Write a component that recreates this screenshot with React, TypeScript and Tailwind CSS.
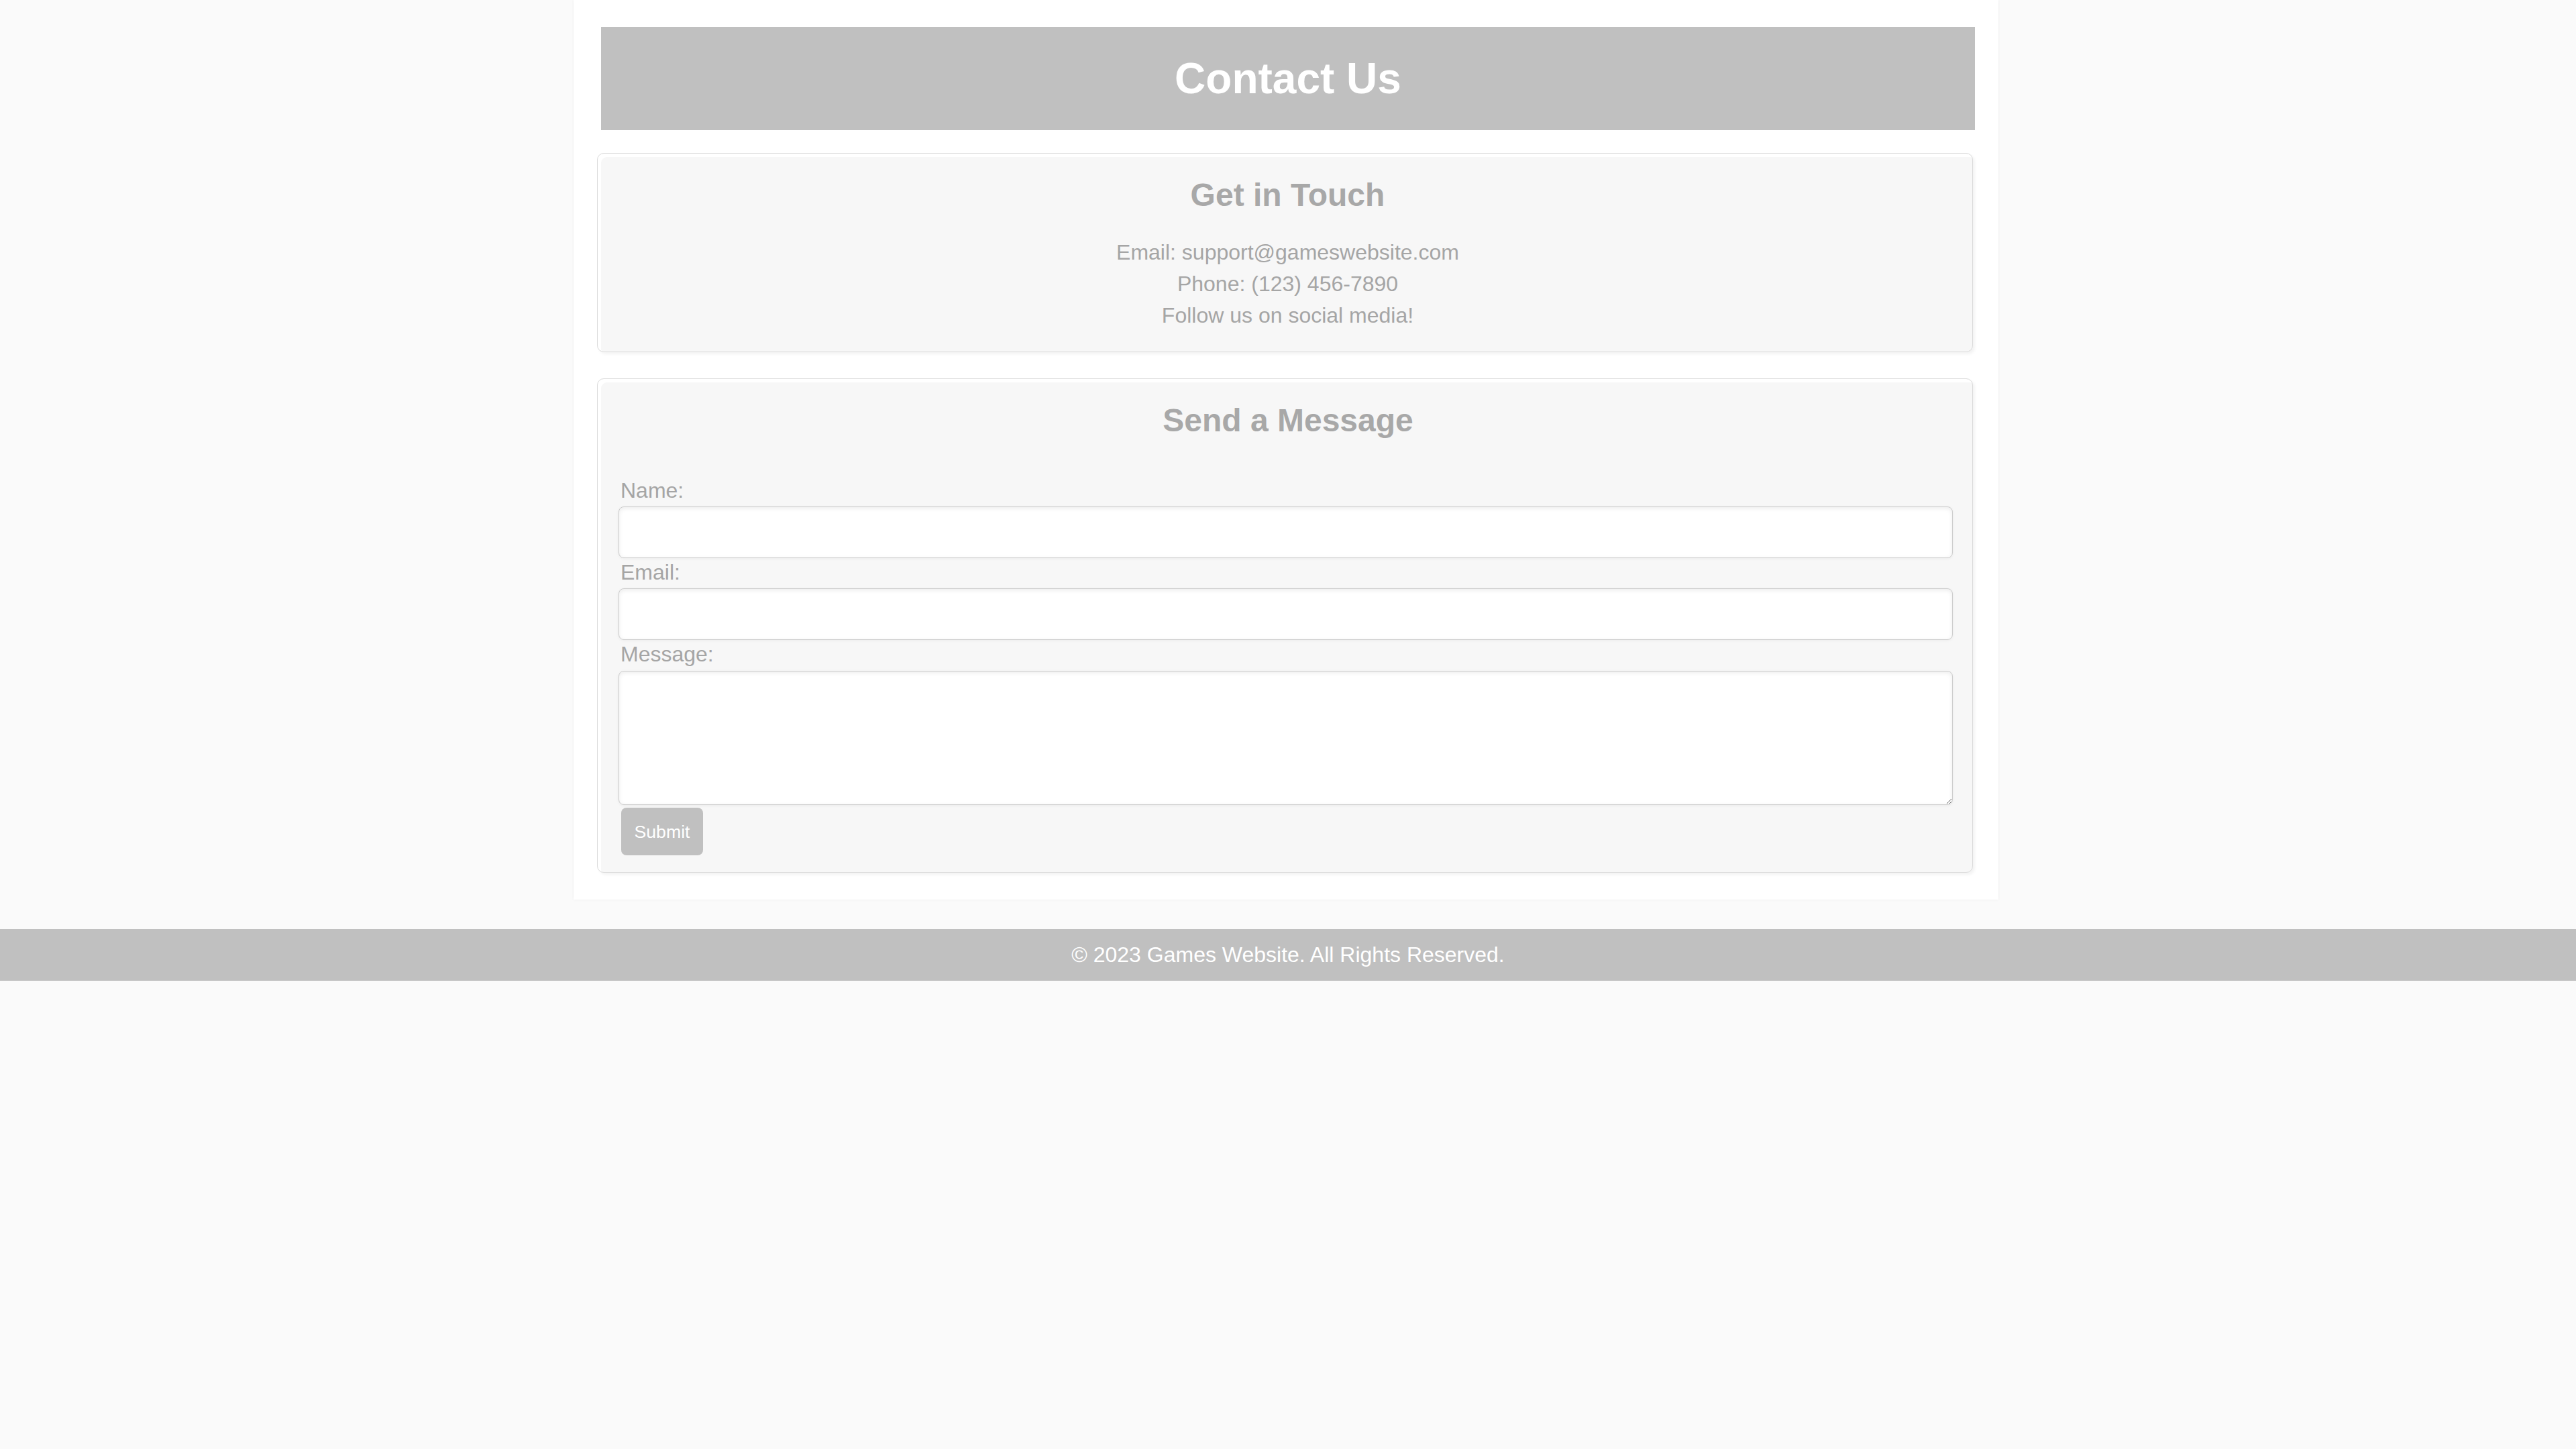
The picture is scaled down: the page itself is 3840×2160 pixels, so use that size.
import React from 'react';

const Card = ({ children, className = '' }: { children: React.ReactNode; className?: string }) => (
  <div
    className={`rounded-[10px] border border-[#dcdcdc] bg-[#f7f7f7] pl-[31px] pr-[29px] pt-[34px] shadow-[inset_5px_5px_0_#ffffff,3px_3px_4px_rgba(0,0,0,0.05)] ${className}`}
  >
    {children}
  </div>
);

const inputClass =
  'block w-full rounded-[8px] border border-[#cccccc] bg-white shadow-[inset_0_2px_6px_rgba(0,0,0,0.08),0_1px_4px_rgba(0,0,0,0.05)] outline-none';

const App = () => {
  return (
    <div className="min-h-screen bg-[#fafafa] font-['Liberation_Sans',Arial,sans-serif]">
      <div className="pr-[6px]">
        <div className="mx-auto flex w-[2124px] flex-col bg-white pb-[40px] pl-[35px] pr-[38px] pt-[40px] shadow-[0_0_4px_rgba(0,0,0,0.06)]">
          {/* Page header */}
          <div className="-mr-[3px] ml-[6px] bg-[#c0c0c0] py-[40px] text-center text-[64px] font-bold leading-[74px] text-white">
            Contact Us
          </div>

          {/* Contact info */}
          <Card className="mt-[34px] pb-[30px]">
            <div className="pl-[6px] text-center text-[#a5a5a5]">
              <h2 className="text-[48px] font-bold leading-[56px] text-[#a8a8a8]">Get in Touch</h2>
              <div className="mt-[34px] text-[32px] leading-[47px]">
                <p>Email: support@gameswebsite.com</p>
                <p>Phone: (123) 456-7890</p>
                <p>Follow us on social media!</p>
              </div>
            </div>
          </Card>

          {/* Form */}
          <Card className="mt-[39px] pb-[25px]">
            <h2 className="pl-[7px] text-center text-[48px] font-bold leading-[56px] text-[#a8a8a8]">Send a Message</h2>
            <form className="mt-[58px] text-[32px] text-[#a5a5a5]" onSubmit={(e) => e.preventDefault()}>
              <label className="block pl-[3px] leading-[37px]">Name:</label>
              <input type="text" className={`mt-[5px] h-[77px] ${inputClass}`} />
              <label className="mt-[3px] block pl-[3px] leading-[37px]">Email:</label>
              <input type="email" className={`mt-[5px] h-[77px] ${inputClass}`} />
              <label className="mt-[3px] block pl-[3px] leading-[37px]">Message:</label>
              <textarea className={`mt-[6px] h-[200px] ${inputClass}`} />
              <button
                type="submit"
                className="ml-[4px] mt-[4px] flex h-[71px] w-[122px] items-center justify-center rounded-[8px] bg-[#c0c0c0] text-[26.67px] text-white"
              >
                Submit
              </button>
            </form>
          </Card>
        </div>
      </div>

      <footer className="mt-[44px] bg-[#c0c0c0] py-[20px] text-center text-[32px] leading-[37px] text-white">
        © 2023 Games Website. All Rights Reserved.
      </footer>
    </div>
  );
};

export default App;
